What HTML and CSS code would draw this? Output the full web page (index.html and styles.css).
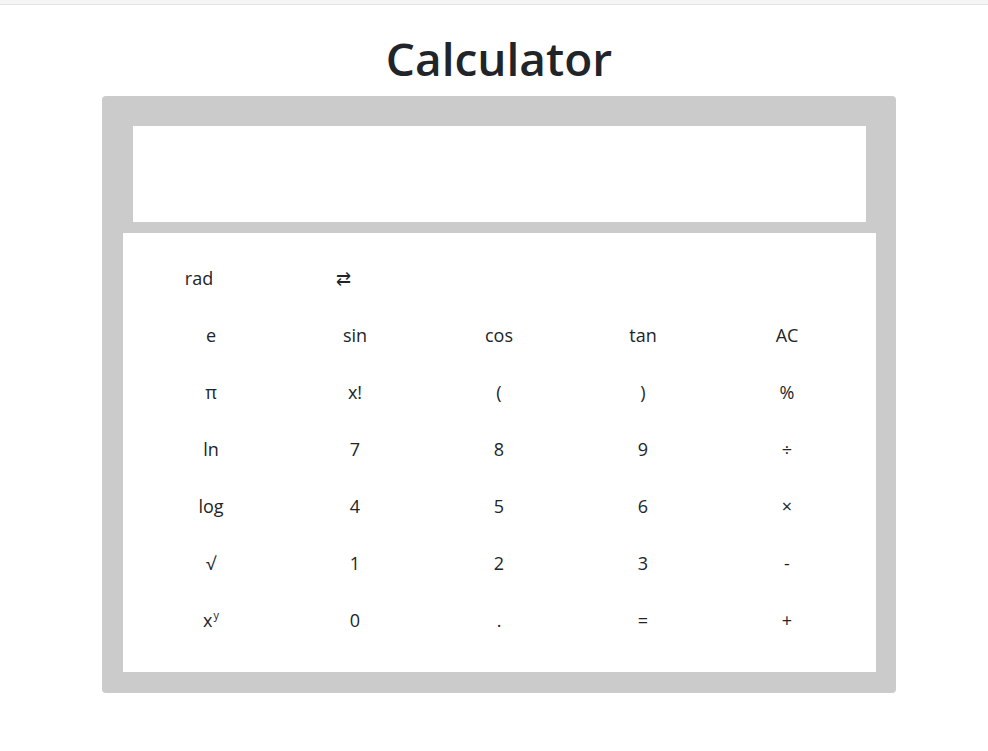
FILE: index.html
```html
<!DOCTYPE html>
<html lang="en">
<head>
<meta charset="utf-8">
<title>Calculator</title>
<link rel="stylesheet" href="styles.css">
</head>
<body>
<div class="topbar"></div>
<main class="page">
  <h1 class="title">Calculator</h1>
  <div class="calc">
    <div class="display"></div>
    <div class="keypad">
      <button class="key key-top">rad</button>
      <button class="key key-top">⇄</button>
      <span></span><span></span><span></span>
      <button class="key">e</button>
      <button class="key">sin</button>
      <button class="key">cos</button>
      <button class="key">tan</button>
      <button class="key">AC</button>
      <button class="key">π</button>
      <button class="key">x!</button>
      <button class="key">(</button>
      <button class="key">)</button>
      <button class="key">%</button>
      <button class="key">ln</button>
      <button class="key">7</button>
      <button class="key">8</button>
      <button class="key">9</button>
      <button class="key">÷</button>
      <button class="key">log</button>
      <button class="key">4</button>
      <button class="key">5</button>
      <button class="key">6</button>
      <button class="key">×</button>
      <button class="key">√</button>
      <button class="key">1</button>
      <button class="key">2</button>
      <button class="key">3</button>
      <button class="key">-</button>
      <button class="key">x<sup class="sup">y</sup></button>
      <button class="key">0</button>
      <button class="key">.</button>
      <button class="key">=</button>
      <button class="key">+</button>
    </div>
  </div>
</main>
</body>
</html>
```
FILE: styles.css
```css
html, body {
  margin: 0;
  padding: 0;
  background: #fff;
  font-family: "Open Sans", "Noto Sans", "Liberation Sans", sans-serif;
  color: #212529;
}
.topbar {
  height: 4px;
  background: #f5f5f5;
  border-bottom: 1px solid #e3e3e3;
}
.page {
  padding-left: 10px;
  display: flex;
  flex-direction: column;
  align-items: center;
}
.title {
  margin: 26px 0 11px;
  font-size: 46px;
  font-weight: 600;
  line-height: 54px;
  color: #212529;
}
.calc {
  width: 794px;
  box-sizing: border-box;
  background: #cbcbcb;
  border-radius: 4px;
  padding: 30px 20px 21px 21px;
}
.display {
  height: 96px;
  margin: 0 10px 11px 10px;
  background: #fff;
}
.keypad {
  height: 439px;
  box-sizing: border-box;
  background: #fff;
  padding: 16px 16px 24px;
  display: grid;
  grid-template-columns: repeat(5, 144px);
  grid-template-rows: repeat(7, 57px);
}
.key {
  border: 0;
  background: transparent;
  font-family: inherit;
  font-size: 18px;
  color: #212529;
  padding: 0;
  cursor: pointer;
}
.key-top {
  padding-right: 24px;
}
.sup {
  font-size: 11px;
  vertical-align: 0;
  position: relative;
  top: -8px;
  margin-left: 1px;
}
```
